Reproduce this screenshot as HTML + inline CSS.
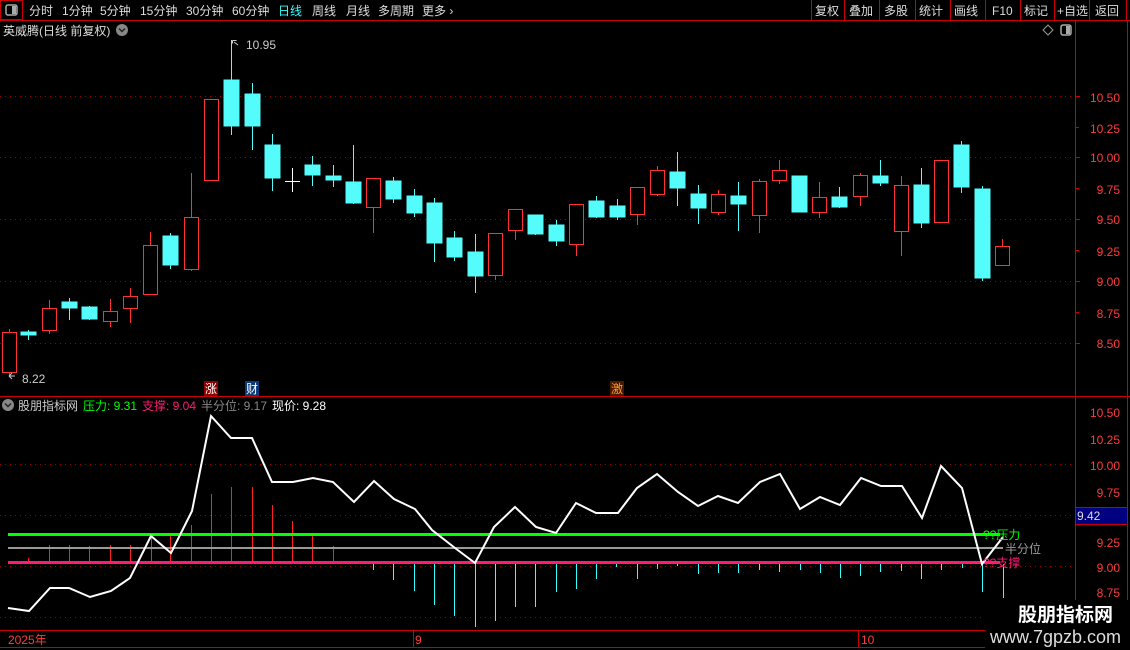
<!DOCTYPE html>
<html><head><meta charset="utf-8"><style>
*{margin:0;padding:0}
body{width:1130px;height:650px;background:#000;overflow:hidden;position:relative;font-family:"Liberation Sans","Noto Sans CJK SC",sans-serif;font-size:12px;color:#ccc}
</style></head><body>
<svg width="1130" height="650" style="position:absolute;left:0;top:0" font-family="Liberation Sans, Noto Sans CJK SC, sans-serif" font-size="12">
<rect x="0.5" y="0.5" width="22" height="19" fill="none" stroke="#c00"/>
<rect x="6" y="5" width="11" height="10" rx="2" fill="none" stroke="#aaa" stroke-width="1.5"/><rect x="12" y="6" width="4" height="8" fill="#aaa"/>
<line x1="0" y1="20.5" x2="1130" y2="20.5" stroke="#c00"/>
<g stroke="#c00"><line x1="811.5" y1="0" x2="811.5" y2="20"/><line x1="844.5" y1="0" x2="844.5" y2="20"/><line x1="879.5" y1="0" x2="879.5" y2="20"/><line x1="915.5" y1="0" x2="915.5" y2="20"/><line x1="950.5" y1="0" x2="950.5" y2="20"/><line x1="985.5" y1="0" x2="985.5" y2="20"/><line x1="1020.5" y1="0" x2="1020.5" y2="20"/><line x1="1054.5" y1="0" x2="1054.5" y2="20"/><line x1="1089.5" y1="0" x2="1089.5" y2="20"/><line x1="1126.5" y1="0" x2="1126.5" y2="20"/></g>
<g fill="#ddd" font-size="12">
<text x="29" y="15">分时</text><text x="62" y="15">1分钟</text><text x="100" y="15">5分钟</text><text x="140" y="15">15分钟</text><text x="186" y="15">30分钟</text><text x="232" y="15">60分钟</text><text x="278" y="15" fill="#3ff">日线</text><text x="312" y="15">周线</text><text x="346" y="15">月线</text><text x="378" y="15">多周期</text><text x="422" y="15">更多 ›</text>
<text x="815" y="15">复权</text><text x="849" y="15">叠加</text><text x="884" y="15">多股</text><text x="919" y="15">统计</text><text x="954" y="15">画线</text><text x="992" y="15">F10</text><text x="1024" y="15">标记</text><text x="1057" y="15">+自选</text><text x="1095" y="15">返回</text>
<text x="3" y="35">英威腾(日线 前复权)</text>
</g>
<circle cx="122" cy="30" r="6" fill="#888"/><path d="M119 28.5l3 3 3-3" stroke="#222" stroke-width="1.5" fill="none"/>
<path d="M1048 25l5 5-5 5-5-5z" fill="none" stroke="#999"/>
<rect x="1061" y="25" width="10" height="10" rx="2" fill="none" stroke="#aaa" stroke-width="1.5"/><rect x="1066" y="26" width="4" height="8" fill="#aaa"/>
<line x1="1075.5" y1="20" x2="1075.5" y2="600" stroke="#c00"/>
<line x1="1127.5" y1="20" x2="1127.5" y2="600" stroke="#c00"/>
<g stroke="#900" stroke-dasharray="1 4"><line x1="0" y1="96.5" x2="1075" y2="96.5"/><line x1="0" y1="157.5" x2="1075" y2="157.5"/><line x1="0" y1="219.5" x2="1075" y2="219.5"/><line x1="0" y1="281.5" x2="1075" y2="281.5"/><line x1="0" y1="343.5" x2="1075" y2="343.5"/>
<line x1="0" y1="464.5" x2="1075" y2="464.5"/><line x1="0" y1="515.5" x2="1075" y2="515.5"/><line x1="0" y1="566.5" x2="1075" y2="566.5"/><line x1="0" y1="617.5" x2="985" y2="617.5"/></g>
<g fill="#ff3c3c" font-size="12" text-anchor="end">
<text x="1120" y="102">10.50</text><text x="1120" y="133">10.25</text><text x="1120" y="162">10.00</text><text x="1120" y="194">9.75</text><text x="1120" y="224">9.50</text><text x="1120" y="256">9.25</text><text x="1120" y="286">9.00</text><text x="1120" y="318">8.75</text><text x="1120" y="348">8.50</text>
<text x="1120" y="417">10.50</text><text x="1120" y="444">10.25</text><text x="1120" y="470">10.00</text><text x="1120" y="497">9.75</text><text x="1120" y="547">9.25</text><text x="1120" y="572">9.00</text><text x="1120" y="597">8.75</text>
</g>
<g stroke="#c00"><line x1="1075" y1="96.5" x2="1080" y2="96.5"/><line x1="1075" y1="127.5" x2="1079" y2="127.5"/><line x1="1075" y1="157.5" x2="1080" y2="157.5"/><line x1="1075" y1="188.5" x2="1079" y2="188.5"/><line x1="1075" y1="219.5" x2="1080" y2="219.5"/><line x1="1075" y1="250.5" x2="1079" y2="250.5"/><line x1="1075" y1="281.5" x2="1080" y2="281.5"/><line x1="1075" y1="312.5" x2="1079" y2="312.5"/><line x1="1075" y1="343.5" x2="1080" y2="343.5"/></g>
<rect x="1075.5" y="507.5" width="52" height="17" fill="#000080" stroke="#c00"/>
<text x="1077" y="520" fill="#ddd">9.42</text>
<g stroke-width="1">
<g stroke="#ff3232" fill="#000">
<line x1="9.5" y1="329" x2="9.5" y2="376"/><rect x="2.5" y="332.5" width="14" height="40"/>
<line x1="49.5" y1="300" x2="49.5" y2="334"/><rect x="42.5" y="308.5" width="14" height="22"/>
<line x1="110.5" y1="299" x2="110.5" y2="327"/><rect x="103.5" y="311.5" width="14" height="10"/>
<line x1="130.5" y1="288" x2="130.5" y2="323"/><rect x="123.5" y="296.5" width="14" height="12"/>
<line x1="150.5" y1="232" x2="150.5" y2="294"/><rect x="143.5" y="245.5" width="14" height="49"/>
<line x1="191.5" y1="173" x2="191.5" y2="271"/><rect x="184.5" y="217.5" width="14" height="52"/>
<rect x="204.5" y="99.5" width="14" height="81"/>
<line x1="373.5" y1="178" x2="373.5" y2="233"/><rect x="366.5" y="178.5" width="14" height="29"/>
<line x1="495.5" y1="233" x2="495.5" y2="280"/><rect x="488.5" y="233.5" width="14" height="42"/>
<line x1="515.5" y1="209" x2="515.5" y2="240"/><rect x="508.5" y="209.5" width="14" height="21"/>
<line x1="576.5" y1="204" x2="576.5" y2="256"/><rect x="569.5" y="204.5" width="14" height="40"/>
<line x1="637.5" y1="187" x2="637.5" y2="225"/><rect x="630.5" y="187.5" width="14" height="27"/>
<line x1="657.5" y1="166" x2="657.5" y2="196"/><rect x="650.5" y="170.5" width="14" height="24"/>
<line x1="718.5" y1="190" x2="718.5" y2="215"/><rect x="711.5" y="194.5" width="14" height="18"/>
<line x1="759.5" y1="179" x2="759.5" y2="233"/><rect x="752.5" y="181.5" width="14" height="34"/>
<line x1="779.5" y1="160" x2="779.5" y2="184"/><rect x="772.5" y="170.5" width="14" height="10"/>
<line x1="819.5" y1="182" x2="819.5" y2="218"/><rect x="812.5" y="197.5" width="14" height="15"/>
<line x1="860.5" y1="173" x2="860.5" y2="206"/><rect x="853.5" y="175.5" width="14" height="21"/>
<line x1="901.5" y1="176" x2="901.5" y2="256"/><rect x="894.5" y="185.5" width="14" height="46"/>
<rect x="934.5" y="160.5" width="14" height="62"/>
<line x1="1002.5" y1="239" x2="1002.5" y2="265"/><rect x="995.5" y="246.5" width="14" height="19"/>
</g>
<g stroke="#54fcfc" fill="#54fcfc">
<line x1="28.5" y1="330" x2="28.5" y2="340"/><rect x="21" y="332" width="15" height="3"/>
<line x1="69.5" y1="298" x2="69.5" y2="320"/><rect x="62" y="302" width="15" height="6"/>
<line x1="89.5" y1="306" x2="89.5" y2="320"/><rect x="82" y="307" width="15" height="12"/>
<line x1="170.5" y1="233" x2="170.5" y2="269"/><rect x="163" y="236" width="15" height="29"/>
<line x1="231.5" y1="40" x2="231.5" y2="135"/><rect x="224" y="80" width="15" height="46"/>
<line x1="252.5" y1="83" x2="252.5" y2="150"/><rect x="245" y="94" width="15" height="32"/>
<line x1="272.5" y1="134" x2="272.5" y2="191"/><rect x="265" y="145" width="15" height="33"/>
<line x1="312.5" y1="156" x2="312.5" y2="186"/><rect x="305" y="165" width="15" height="10"/>
<line x1="333.5" y1="165" x2="333.5" y2="187"/><rect x="326" y="176" width="15" height="4"/>
<line x1="353.5" y1="145" x2="353.5" y2="204"/><rect x="346" y="182" width="15" height="21"/>
<line x1="393.5" y1="177" x2="393.5" y2="203"/><rect x="386" y="181" width="15" height="18"/>
<line x1="414.5" y1="189" x2="414.5" y2="217"/><rect x="407" y="196" width="15" height="17"/>
<line x1="434.5" y1="198" x2="434.5" y2="262"/><rect x="427" y="203" width="15" height="40"/>
<line x1="454.5" y1="231" x2="454.5" y2="261"/><rect x="447" y="238" width="15" height="19"/>
<line x1="475.5" y1="234" x2="475.5" y2="293"/><rect x="468" y="252" width="15" height="24"/>
<line x1="535.5" y1="215" x2="535.5" y2="235"/><rect x="528" y="215" width="15" height="19"/>
<line x1="556.5" y1="220" x2="556.5" y2="246"/><rect x="549" y="225" width="15" height="16"/>
<line x1="596.5" y1="196" x2="596.5" y2="218"/><rect x="589" y="201" width="15" height="16"/>
<line x1="617.5" y1="199" x2="617.5" y2="220"/><rect x="610" y="206" width="15" height="11"/>
<line x1="677.5" y1="152" x2="677.5" y2="206"/><rect x="670" y="172" width="15" height="16"/>
<line x1="698.5" y1="185" x2="698.5" y2="224"/><rect x="691" y="194" width="15" height="14"/>
<line x1="738.5" y1="182" x2="738.5" y2="231"/><rect x="731" y="196" width="15" height="8"/>
<line x1="799.5" y1="176" x2="799.5" y2="212"/><rect x="792" y="176" width="15" height="36"/>
<line x1="839.5" y1="187" x2="839.5" y2="208"/><rect x="832" y="197" width="15" height="10"/>
<line x1="880.5" y1="160" x2="880.5" y2="186"/><rect x="873" y="176" width="15" height="7"/>
<line x1="921.5" y1="168" x2="921.5" y2="228"/><rect x="914" y="185" width="15" height="38"/>
<line x1="961.5" y1="141" x2="961.5" y2="193"/><rect x="954" y="145" width="15" height="42"/>
<line x1="982.5" y1="186" x2="982.5" y2="281"/><rect x="975" y="189" width="15" height="89"/>
</g>
<g stroke="#fff"><line x1="292.5" y1="168" x2="292.5" y2="192"/><line x1="285" y1="181.5" x2="300" y2="181.5"/></g>
</g>
<path d="M232.5 40.5h4M232.5 40.5v3M234 42l4 3" stroke="#ccc" fill="none"/><text x="246" y="49" fill="#ccc">10.95</text>
<path d="M9 376h6M9 376l3-3M9 376l3 3" stroke="#ccc" fill="none"/><text x="22" y="383" fill="#ccc">8.22</text>
<rect x="204" y="381" width="14" height="15" fill="#8b0000"/><text x="205" y="393" fill="#fff">涨</text>
<rect x="245" y="381" width="14" height="15" fill="#0a3a7a"/><text x="246" y="393" fill="#fff">财</text>
<rect x="610" y="381" width="14" height="15" fill="#4a1a00"/><text x="611" y="393" fill="#ff9a20">激</text>
<line x1="0" y1="396.5" x2="1130" y2="396.5" stroke="#c00"/>
<circle cx="8" cy="405" r="6" fill="#888"/><path d="M5 403.5l3 3 3-3" stroke="#222" stroke-width="1.5" fill="none"/>
<text x="18" y="410" fill="#ccc">股朋指标网</text>
<text x="83" y="410" fill="#0f0">压力: 9.31</text>
<text x="142" y="410" fill="#ff1a75">支撑: 9.04</text>
<text x="201" y="410" fill="#888">半分位: 9.17</text>
<text x="272" y="410" fill="#fff">现价: 9.28</text>
<g stroke="#ff2020"><line x1="28.5" y1="558" x2="28.5" y2="563"/><line x1="49.5" y1="545" x2="49.5" y2="563"/><line x1="69.5" y1="545" x2="69.5" y2="563"/><line x1="89.5" y1="546" x2="89.5" y2="563"/><line x1="110.5" y1="545" x2="110.5" y2="563"/><line x1="130.5" y1="545" x2="130.5" y2="563"/><line x1="151.5" y1="536" x2="151.5" y2="563"/><line x1="170.5" y1="536" x2="170.5" y2="563"/><line x1="191.5" y1="525" x2="191.5" y2="563"/><line x1="211.5" y1="494" x2="211.5" y2="563"/><line x1="231.5" y1="487" x2="231.5" y2="563"/><line x1="252.5" y1="487" x2="252.5" y2="563"/><line x1="272.5" y1="505" x2="272.5" y2="563"/><line x1="292.5" y1="521" x2="292.5" y2="563"/><line x1="312.5" y1="536" x2="312.5" y2="563"/><line x1="333.5" y1="546" x2="333.5" y2="563"/></g>
<g stroke="#3ff"><line x1="373.5" y1="564" x2="373.5" y2="570"/><line x1="393.5" y1="564" x2="393.5" y2="580"/><line x1="414.5" y1="564" x2="414.5" y2="591"/><line x1="434.5" y1="564" x2="434.5" y2="605"/><line x1="454.5" y1="564" x2="454.5" y2="616"/><line x1="475.5" y1="564" x2="475.5" y2="627"/><line x1="495.5" y1="564" x2="495.5" y2="621"/><line x1="515.5" y1="564" x2="515.5" y2="607"/><line x1="535.5" y1="564" x2="535.5" y2="607"/><line x1="556.5" y1="564" x2="556.5" y2="592"/><line x1="576.5" y1="564" x2="576.5" y2="589"/><line x1="596.5" y1="564" x2="596.5" y2="579"/><line x1="616.5" y1="564" x2="616.5" y2="567"/><line x1="637.5" y1="564" x2="637.5" y2="579"/><line x1="657.5" y1="564" x2="657.5" y2="569"/><line x1="677.5" y1="564" x2="677.5" y2="566"/><line x1="698.5" y1="564" x2="698.5" y2="574"/><line x1="718.5" y1="564" x2="718.5" y2="573"/><line x1="738.5" y1="564" x2="738.5" y2="573"/><line x1="759.5" y1="564" x2="759.5" y2="570"/><line x1="779.5" y1="564" x2="779.5" y2="572"/><line x1="800.5" y1="564" x2="800.5" y2="570"/><line x1="820.5" y1="564" x2="820.5" y2="573"/><line x1="840.5" y1="564" x2="840.5" y2="578"/><line x1="860.5" y1="564" x2="860.5" y2="576"/><line x1="880.5" y1="564" x2="880.5" y2="572"/><line x1="901.5" y1="564" x2="901.5" y2="571"/><line x1="921.5" y1="564" x2="921.5" y2="579"/><line x1="941.5" y1="564" x2="941.5" y2="570"/><line x1="962.5" y1="564" x2="962.5" y2="568"/><line x1="982.5" y1="564" x2="982.5" y2="592"/><line x1="1003.5" y1="564" x2="1003.5" y2="598"/></g>
<line x1="8" y1="534.5" x2="1000" y2="534.5" stroke="#0f0" stroke-width="3"/>
<line x1="8" y1="548" x2="1003" y2="548" stroke="#999" stroke-width="2"/>
<line x1="8" y1="562.5" x2="1000" y2="562.5" stroke="#ff1a75" stroke-width="3"/>
<polyline fill="none" stroke="#fff" stroke-width="2" points="8,608 29,611 50,588 69,588 90,597 111,591 130,578 151,536 171,553 192,511 211,416 231,438 252,438 272,482 293,482 313,478 333,482 354,502 374,481 394,499 415,509 432,530 455,548 475,563 494,527 515,507 536,527 556,533 576,503 596,513 618,513 637,488 657,474 678,492 698,506 718,496 738,503 760,482 780,474 800,509 820,497 840,505 861,478 881,486 902,486 922,518 941,466 962,488 982,564 1003,537"/>
<text x="983" y="539" fill="#0f0">??压力</text>
<text x="1005" y="553" fill="#999">半分位</text>
<text x="983" y="567" fill="#ff1a75">??支撑</text>
<line x1="0" y1="630.5" x2="985" y2="630.5" stroke="#c00"/>
<line x1="0" y1="647.5" x2="985" y2="647.5" stroke="#c00"/>
<line x1="413.5" y1="630" x2="413.5" y2="647" stroke="#c00"/>
<line x1="858.5" y1="630" x2="858.5" y2="647" stroke="#c00"/>
<text x="8" y="644" fill="#ff3c3c">2025年</text>
<text x="415" y="644" fill="#ff3c3c">9</text>
<text x="861" y="644" fill="#ff3c3c">10</text>
<rect x="985" y="600" width="145" height="50" fill="#000"/>
<text x="1018" y="621" fill="#fff" font-size="19" font-weight="bold">股朋指标网</text>
<text x="990" y="643" fill="#ddd" font-size="18">www.7gpzb.com</text>
</svg>
</body></html>
